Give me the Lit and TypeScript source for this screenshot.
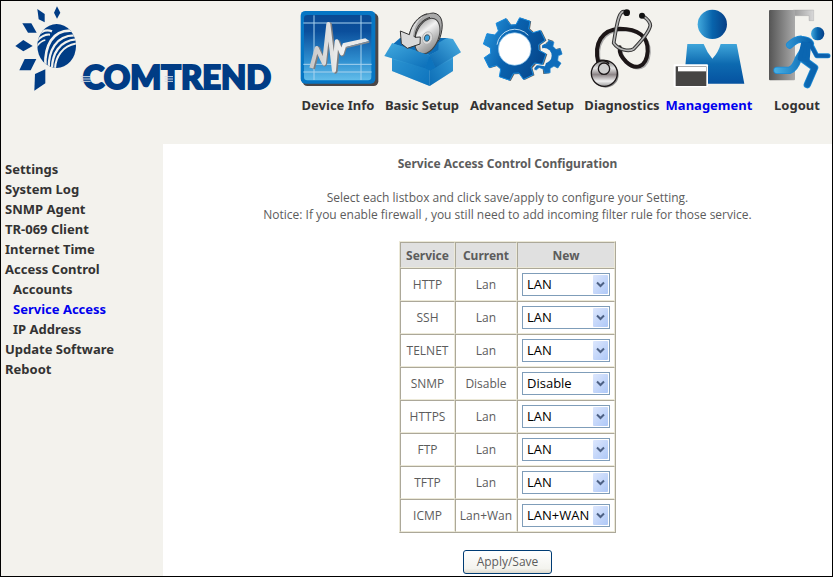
import { LitElement, html, css, svg, TemplateResult } from "lit";
import { customElement, state } from "lit/decorators.js";
import { classMap } from "lit/directives/class-map.js";

/** Outline of a cog wheel with evenly spaced teeth. */
function gear(cx: number, cy: number, outer: number, inner: number, teeth: number, start: number, top: number, base: number): string {
  const pt = (r: number, deg: number) => {
    const a = (deg * Math.PI) / 180;
    return `${(cx + r * Math.cos(a)).toFixed(1)} ${(cy + r * Math.sin(a)).toFixed(1)}`;
  };
  const parts: string[] = [];
  for (let i = 0; i < teeth; i++) {
    const a = start + (360 / teeth) * i;
    parts.push(pt(inner, a - base), pt(outer, a - top), pt(outer, a + top), pt(inner, a + base));
  }
  return `M${parts.join("L")}Z`;
}

const deviceIcon = html`<svg class="icon" viewBox="24 24 240 252" aria-hidden="true">
  <defs>
    <linearGradient id="screen" x1="0" y1="0" x2="0" y2="1">
      <stop offset="0" stop-color="#0a4a93" /><stop offset=".25" stop-color="#0b4f9c" />
      <stop offset=".7" stop-color="#2f8fd0" /><stop offset="1" stop-color="#62bdea" />
    </linearGradient>
    <linearGradient id="trace" x1="0" y1="0" x2="1" y2="0">
      <stop offset="0" stop-color="#c9c9c9" /><stop offset="1" stop-color="#f4f4f4" />
    </linearGradient>
  </defs>
  <rect x="38" y="40" width="227" height="218" rx="14" fill="#4a4748" />
  <rect x="32" y="33" width="224" height="218" rx="14" fill="#0676c4" />
  <rect x="42" y="45" width="202" height="196" rx="10" fill="url(#screen)" />
  <path d="M72 46V240M213 46V240M40 69H245M40 193H245M40 216H245" stroke="#a9d3ee" stroke-width="3" fill="none" />
  <path d="M68 206L84 146L104 192L119 74L136 214L144 126L157 162L166 134" fill="none" stroke="#7d7d80" stroke-width="14" stroke-linejoin="round" />
  <path d="M64 204L80 144L102 190L115 72L132 212L140 124L155 160L164 132" fill="none" stroke="url(#trace)" stroke-width="12" stroke-linejoin="round" />
  <path d="M158 130L226 115L238 123L168 141Z" fill="#e9e9e9" />
  <path d="M168 141L238 123V128L168 145Z" fill="#8b8b8d" />
</svg>`;

const setupIcon = html`<svg class="icon" viewBox="276 24 240 252" aria-hidden="true">
  <defs>
    <linearGradient id="boxL" x1="0" y1="0" x2="1" y2="1">
      <stop offset="0" stop-color="#42aadf" /><stop offset="1" stop-color="#0a6db8" />
    </linearGradient>
    <linearGradient id="boxR" x1="1" y1="0" x2="0" y2="1">
      <stop offset="0" stop-color="#4db1e4" /><stop offset="1" stop-color="#0864ad" />
    </linearGradient>
    <linearGradient id="disc" x1="0" y1="0" x2="1" y2="1">
      <stop offset="0" stop-color="#8a8a8a" /><stop offset=".35" stop-color="#f2f2f2" />
      <stop offset=".65" stop-color="#b5b5b5" /><stop offset="1" stop-color="#777" />
    </linearGradient>
  </defs>
  <path d="M306 135L330 114L470 114L489 130L420 166Z" fill="#0d6cb5" />
  <path d="M306 130L419 165V258L306 213Z" fill="url(#boxL)" />
  <path d="M489 130L419 165V258L489 213Z" fill="url(#boxR)" />
  <path d="M358 104C366 70 396 40 430 39C458 42 464 74 448 119L440 128L392 118Z" fill="#a9a9a9" stroke="#333" stroke-width="3" />
  <ellipse cx="412" cy="108" rx="34" ry="56" transform="rotate(22 412 108)" fill="url(#disc)" stroke="#444" stroke-width="3" />
  <ellipse cx="412" cy="114" rx="15" ry="19" transform="rotate(20 412 114)" fill="#dcdcdc" stroke="#aaa" stroke-width="2" />
  <ellipse cx="411" cy="114" rx="8" ry="10" transform="rotate(20 411 114)" fill="#3a9fdc" stroke="#333" stroke-width="2" />
  <path d="M306 130L419 166L405 205L283 168Z" fill="url(#boxL)" />
  <path d="M489 117L513 157L436 203L419 166L445 150L446 128L470 114Z" fill="url(#boxR)" />
  <path d="M430 39C394 42 374 70 369 108L375 112L390 111V131L352 145L334 131L331 93L358 104C366 70 396 40 430 39Z" fill="#d9d9d9" />
  <path d="M420 52C392 60 376 84 375 112L391 111L390 132L352 145L334 131L331 93L358 104C364 74 384 48 412 41" fill="none" stroke="#333" stroke-width="3" stroke-linejoin="round" />
  <path d="M405 205L419 166L436 203L420 212Z" fill="#0d73bd" />
  <path d="M306 178V213L419 258L489 213V176L436 203L420 212L405 205Z" fill="#157fc6" opacity=".35" />
</svg>`;

const advancedIcon = html`<svg class="icon" viewBox="51 24 240 252" aria-hidden="true">
  <defs>
    <linearGradient id="cog" x1="0" y1="0" x2="1" y2="0.4">
      <stop offset="0" stop-color="#2b9be0" /><stop offset=".5" stop-color="#0a63b0" />
      <stop offset="1" stop-color="#064a90" />
    </linearGradient>
  </defs>
  ${svg`<path d=${gear(242, 170, 53, 38, 7, -70, 10, 15)} fill="#555" transform="translate(-3 -1)" />
  <path d=${gear(242, 170, 50, 38, 7, -70, 10, 15)} fill="#0f6cba" stroke="#2590dc" stroke-width="2" />`}
  <circle cx="237" cy="167" r="23" fill="#f3f2ed" />
  ${svg`<path d=${gear(149, 147, 96, 75, 8, -116, 10, 16)} fill="#5b5b5d" stroke="#f3f2ed" stroke-width="8" transform="translate(4 1)" />
  <path d=${gear(149, 147, 96, 75, 8, -116, 10, 16)} fill="#5b5b5d" transform="translate(3 1)" />
  <path d=${gear(149, 147, 95, 73, 8, -116, 10, 16)} fill="url(#cog)" stroke="#178ce0" stroke-width="3" stroke-linejoin="round" />`}
  <path d="M96 134A54 54 0 0 1 190 106" fill="none" stroke="#b9d9f0" stroke-width="3" />
  <circle cx="149" cy="147" r="49" fill="#fff" stroke="#79b9e8" stroke-width="2" />
</svg>`;

const diagnosticsIcon = html`<svg class="icon" viewBox="351 24 240 252" aria-hidden="true">
  <defs>
    <linearGradient id="bell" x1="0" y1="0" x2="0" y2="1">
      <stop offset="0" stop-color="#777" /><stop offset=".3" stop-color="#e6e6e6" />
      <stop offset=".55" stop-color="#8b8385" /><stop offset=".8" stop-color="#f1f1f1" />
      <stop offset="1" stop-color="#999" />
    </linearGradient>
  </defs>
  <g fill="none" stroke-linecap="round" stroke-linejoin="round">
    <path d="M400 188C385 130 412 88 464 86C520 86 550 110 548 154C544 205 510 210 484 186C468 170 463 160 464 142" stroke="#aaa" stroke-width="9" transform="translate(5 4)" />
    <path d="M400 188C385 130 412 88 464 86C520 86 550 110 548 154C544 205 510 210 484 186C468 170 463 160 464 142" stroke="#1c1617" stroke-width="12" />
    <path d="M481 36C464 28 457 60 446 129C460 150 492 156 506 147C536 116 553 90 556 77C556 66 546 56 534 48" stroke="#333" stroke-width="11" />
    <path d="M481 36C464 28 457 60 446 129C460 150 492 156 506 147C536 116 553 90 556 77C556 66 546 56 534 48" stroke="#b4b4b4" stroke-width="5" />
  </g>
  <circle cx="485" cy="38" r="10" fill="#111" /><circle cx="531" cy="47" r="9" fill="#111" />
  <circle cx="422" cy="224" r="39" fill="#888" />
  <circle cx="418" cy="220" r="39" fill="url(#bell)" stroke="#1b1718" stroke-width="4" />
  <circle cx="417" cy="206" r="17" fill="#cfcfcf" stroke="#1b1718" stroke-width="4" />
  <path d="M397 184C410 178 426 182 432 191" stroke="#1b1718" stroke-width="5" fill="none" />
</svg>`;

const managementIcon = html`<svg class="icon" viewBox="42 24 240 252" aria-hidden="true">
  <defs>
    <linearGradient id="head" x1="0" y1="0" x2="1" y2="0">
      <stop offset="0" stop-color="#43aade" /><stop offset=".5" stop-color="#0864ac" />
      <stop offset="1" stop-color="#063f86" />
    </linearGradient>
    <linearGradient id="torso" x1="0" y1="0" x2="0" y2="1">
      <stop offset="0" stop-color="#3fa5da" /><stop offset=".5" stop-color="#0d6ab0" />
      <stop offset="1" stop-color="#0552a0" />
    </linearGradient>
  </defs>
  <circle cx="172" cy="73" r="44" fill="url(#head)" />
  <path d="M97 132H146Q156 158 172 176Q190 158 197 132H245L268 251H86Z" fill="url(#torso)" />
  <rect x="56" y="193" width="103" height="69" rx="3" fill="#fff" />
  <rect x="62" y="199" width="92" height="59" fill="#464544" />
  <rect x="69" y="200" width="84" height="14" fill="#fff" />
</svg>`;

const logoutIcon = html`<svg class="icon exit" viewBox="327 24 198 252" aria-hidden="true">
  <defs>
    <linearGradient id="door" x1="0" y1="0" x2="1" y2="0">
      <stop offset="0" stop-color="#555" /><stop offset="1" stop-color="#aaa" />
    </linearGradient>
    <linearGradient id="lintel" x1="0" y1="0" x2="1" y2="0">
      <stop offset="0" stop-color="#999" /><stop offset="1" stop-color="#d8d8d8" />
    </linearGradient>
    <linearGradient id="runner" gradientUnits="userSpaceOnUse" x1="355" y1="0" x2="525" y2="0">
      <stop offset="0" stop-color="#4bb3e6" /><stop offset=".6" stop-color="#0b68b2" />
      <stop offset="1" stop-color="#0a5ba6" />
    </linearGradient>
  </defs>
  <path d="M415 30H476V62H462V47H415Z" fill="url(#lintel)" stroke="#999" />
  <rect x="342" y="30" width="78" height="211" rx="3" fill="url(#door)" />
  <g fill="none" stroke-linecap="round" stroke-linejoin="round">
    <path d="M366 211H404Q420 206 430 176L456 134M404 135Q424 116 440 118Q460 120 466 130M442 176L479 203L457 254" stroke="#1d8ad4" stroke-width="22" />
    <path d="M466 130L485 167H519" stroke="#1d8ad4" stroke-width="15" />
    <path d="M366 211H404Q420 206 430 176L456 134M404 135Q424 116 440 118Q460 120 466 130M442 176L479 203L457 254" stroke="url(#runner)" stroke-width="17" />
    <path d="M464 130L485 167L519 168" stroke="#0b5fab" stroke-width="11" />
    <path d="M444 130L434 176L458 180L462 134Z" fill="#0b66b1" stroke="#0b66b1" stroke-width="12" />
  </g>
  <circle cx="488" cy="101" r="20" fill="url(#head)" />
</svg>`;

interface TopItem {
  label: string;
  icon: TemplateResult;
  size: string;
}

interface Service {
  name: string;
  current: string;
  value: string;
}

@customElement("app-root")
export class AppRoot extends LitElement {
  static styles = css`
    :host {
      display: block;
      font-family: "Open Sans", Tahoma, sans-serif;
      font-size: 12px;
      line-height: 17px;
      color: #5c5c5c;
    }
    .page {
      box-sizing: border-box;
      min-height: 100vh;
      display: flex;
      flex-direction: column;
      border: 1px solid #000;
      background: #f3f2ed;
    }
    .top {
      display: flex;
      justify-content: space-between;
      align-items: flex-start;
      height: 143px;
    }
    .logo {
      width: 275px;
      height: 96px;
      flex: none;
    }
    .wordmark {
      font: 900 98px Lato, sans-serif;
      fill: #003c85;
      stroke: #003c85;
      stroke-width: 6px;
    }
    .tabs {
      display: flex;
      gap: 4px;
      padding: 7px 2px 0 0;
    }
    .tab {
      width: 80px;
      display: flex;
      flex-direction: column;
      align-items: center;
      gap: 3px;
    }
    .tab.wide { width: 112px; }
    .tab.medium { width: 86px; }
    .tab.small { width: 66px; margin-left: 8px; }
    .icon { width: 80px; height: 84px; overflow: visible; }
    .icon.exit { width: 66px; }
    a {
      color: #333;
      font-family: "Noto Sans", Tahoma, sans-serif;
      font-weight: 700;
      font-size: 13px;
      line-height: 20px;
      text-decoration: none;
      white-space: nowrap;
    }
    a.active { color: #0000ee; }
    .body { display: flex; flex: 1; }
    .side {
      box-sizing: border-box;
      width: 162px;
      flex: none;
      padding: 15px 0 0 4px;
      display: flex;
      flex-direction: column;
    }
    .side .sub { padding-left: 8px; }
    main {
      flex: 1;
      display: flex;
      flex-direction: column;
      align-items: center;
      padding: 11px 0 2px 20px;
      background: #fff;
      text-align: center;
    }
    h1 {
      margin: 0 0 17px;
      font-family: "Noto Sans", Tahoma, sans-serif;
      font-size: 12px;
      line-height: 17px;
    }
    p { margin: 0; }
    form { display: flex; flex-direction: column; align-items: center; gap: 17px; margin-top: 18px; }
    table {
      border: 1px solid;
      border-color: #ece9d8 #aca899 #aca899 #ece9d8;
      border-spacing: 0;
    }
    th, td {
      box-sizing: border-box;
      height: 33px;
      padding: 0 3px;
      border: 1px solid;
      border-color: #aca899 #ece9d8 #ece9d8 #aca899;
      font-weight: 400;
    }
    thead th {
      height: 26px;
      background: #e0e0e0;
      font-family: "Noto Sans", Tahoma, sans-serif;
      font-weight: 700;
    }
    .c1 { width: 55px; }
    .c2 { width: 62px; }
    .c3 { width: 98px; }
    .pick { position: relative; display: block; width: 88px; margin: 0 auto; }
    select {
      display: block;
      appearance: none;
      box-sizing: border-box;
      width: 100%;
      height: 23px;
      margin: 0;
      padding: 0 0 1px 4px;
      border: 1px solid #7f9db9;
      border-radius: 0;
      background: #fff;
      color: #000;
      font: 13px "Open Sans", Tahoma, sans-serif;
    }
    .arrow {
      position: absolute;
      top: 2px;
      right: 2px;
      width: 15px;
      height: 19px;
      pointer-events: none;
    }
    button {
      box-sizing: border-box;
      width: 89px;
      height: 24px;
      padding: 0 0 2px;
      border: 1px solid #003c74;
      border-radius: 3px;
      background: linear-gradient(#ffffff, #f3f3ee 80%, #dcd8cc);
      color: #5c5c5c;
      font: 12px "Open Sans", Tahoma, sans-serif;
    }
  `;

  private tabs: TopItem[] = [
    { label: "Device Info", icon: deviceIcon, size: "" },
    { label: "Basic Setup", icon: setupIcon, size: "" },
    { label: "Advanced Setup", icon: advancedIcon, size: "wide" },
    { label: "Diagnostics", icon: diagnosticsIcon, size: "" },
    { label: "Management", icon: managementIcon, size: "medium" },
    { label: "Logout", icon: logoutIcon, size: "small" },
  ];

  private menu: { label: string; sub?: boolean }[] = [
    { label: "Settings" },
    { label: "System Log" },
    { label: "SNMP Agent" },
    { label: "TR-069 Client" },
    { label: "Internet Time" },
    { label: "Access Control" },
    { label: "Accounts", sub: true },
    { label: "Service Access", sub: true },
    { label: "IP Address", sub: true },
    { label: "Update Software" },
    { label: "Reboot" },
  ];

  @state() private services: Service[] = [
    { name: "HTTP", current: "Lan", value: "LAN" },
    { name: "SSH", current: "Lan", value: "LAN" },
    { name: "TELNET", current: "Lan", value: "LAN" },
    { name: "SNMP", current: "Disable", value: "Disable" },
    { name: "HTTPS", current: "Lan", value: "LAN" },
    { name: "FTP", current: "Lan", value: "LAN" },
    { name: "TFTP", current: "Lan", value: "LAN" },
    { name: "ICMP", current: "Lan+Wan", value: "LAN+WAN" },
  ];

  private options = ["LAN", "Disable", "LAN+WAN"];

  private logo() {
    return html`<svg class="logo" viewBox="3 3 825 288" role="img" aria-label="Comtrend">
      <defs><clipPath id="globe"><ellipse cx="170" cy="138" rx="58" ry="66" /></clipPath></defs>
      <g fill="#003c85">
        <path d="M171 19L181 38L171 56L162 38Z" />
        <path d="M112 27L134 42V67L116 58Z" />
        <path d="M67 70H94L110 98H84Z" />
        <path d="M46 138L70 120L98 138L70 154Z" />
        <path d="M74 177H109L92 211H58Z" />
        <path d="M105 222L136 208V250L103 272Z" />
        <ellipse cx="170" cy="138" rx="58" ry="66" />
      </g>
      <g fill="none" stroke="#f3f2ed" stroke-width="7" clip-path="url(#globe)">
        <path d="M108 110Q132 84 156 94" />
        <path d="M108 126Q128 102 150 104" stroke-width="6" />
        <path d="M108 142Q122 122 136 120" stroke-width="5" />
        <path d="M136 198C134 140 156 88 216 92" stroke-width="8" />
        <path d="M146 204C146 156 166 104 226 106" />
        <path d="M156 206C156 164 178 120 230 118" />
        <path d="M165 208C166 172 186 136 232 130" stroke-width="6" />
      </g>
      <text class="wordmark" x="248" y="268">COMTREND</text>
      <path d="M242 230H272M242 237H272M242 244H272M494 230H519M494 237H519M494 244H519" stroke="#d5dce4" stroke-width="3" />
    </svg>`;
  }

  private change(index: number, event: Event) {
    const value = (event.target as HTMLSelectElement).value;
    this.services = this.services.map((s, i) => (i === index ? { ...s, value } : s));
  }

  render() {
    return html`<div class="page">
      <header class="top">
        ${this.logo()}
        <nav class="tabs" aria-label="Sections">
          ${this.tabs.map(
            (t) => html`<a href="#" class="tab ${t.size} ${t.label === "Management" ? "active" : ""}">${t.icon}<span>${t.label}</span></a>`
          )}
        </nav>
      </header>
      <div class="body">
        <nav class="side" aria-label="Management">
          ${this.menu.map(
            (m) => html`<a href="#" class=${classMap({ sub: !!m.sub, active: m.label === "Service Access" })}>${m.label}</a>`
          )}
        </nav>
        <main>
          <h1>Service Access Control Configuration</h1>
          <p>Select each listbox and click save/apply to configure your Setting.</p>
          <p>Notice: If you enable firewall , you still need to add incoming filter rule for those service.</p>
          <form @submit=${(e: Event) => e.preventDefault()}>
            <table>
              <thead>
                <tr><th class="c1" scope="col">Service</th><th class="c2" scope="col">Current</th><th class="c3" scope="col">New</th></tr>
              </thead>
              <tbody>
                ${this.services.map(
                  (s, i) => html`<tr>
                    <th scope="row">${s.name}</th>
                    <td>${s.current}</td>
                    <td>
                      <span class="pick">
                        <select aria-label=${s.name} @change=${(e: Event) => this.change(i, e)}>
                          ${this.options.map((o) => html`<option ?selected=${o === s.value}>${o}</option>`)}
                        </select>
                        <svg class="arrow" viewBox="0 0 15 19" aria-hidden="true">
                          <defs><linearGradient id="knob" x1="0" y1="0" x2="1" y2="1"><stop offset="0" stop-color="#dde7fd" /><stop offset="1" stop-color="#aec8f7" /></linearGradient></defs>
                          <rect width="15" height="19" rx="1" fill="url(#knob)" />
                          <path d="M4 7.500L7.500 11L11 7.500" fill="none" stroke="#4d6185" stroke-width="2" />
                        </svg>
                      </span>
                    </td>
                  </tr>`
                )}
              </tbody>
            </table>
            <button type="submit">Apply/Save</button>
          </form>
        </main>
      </div>
    </div>`;
  }
}
